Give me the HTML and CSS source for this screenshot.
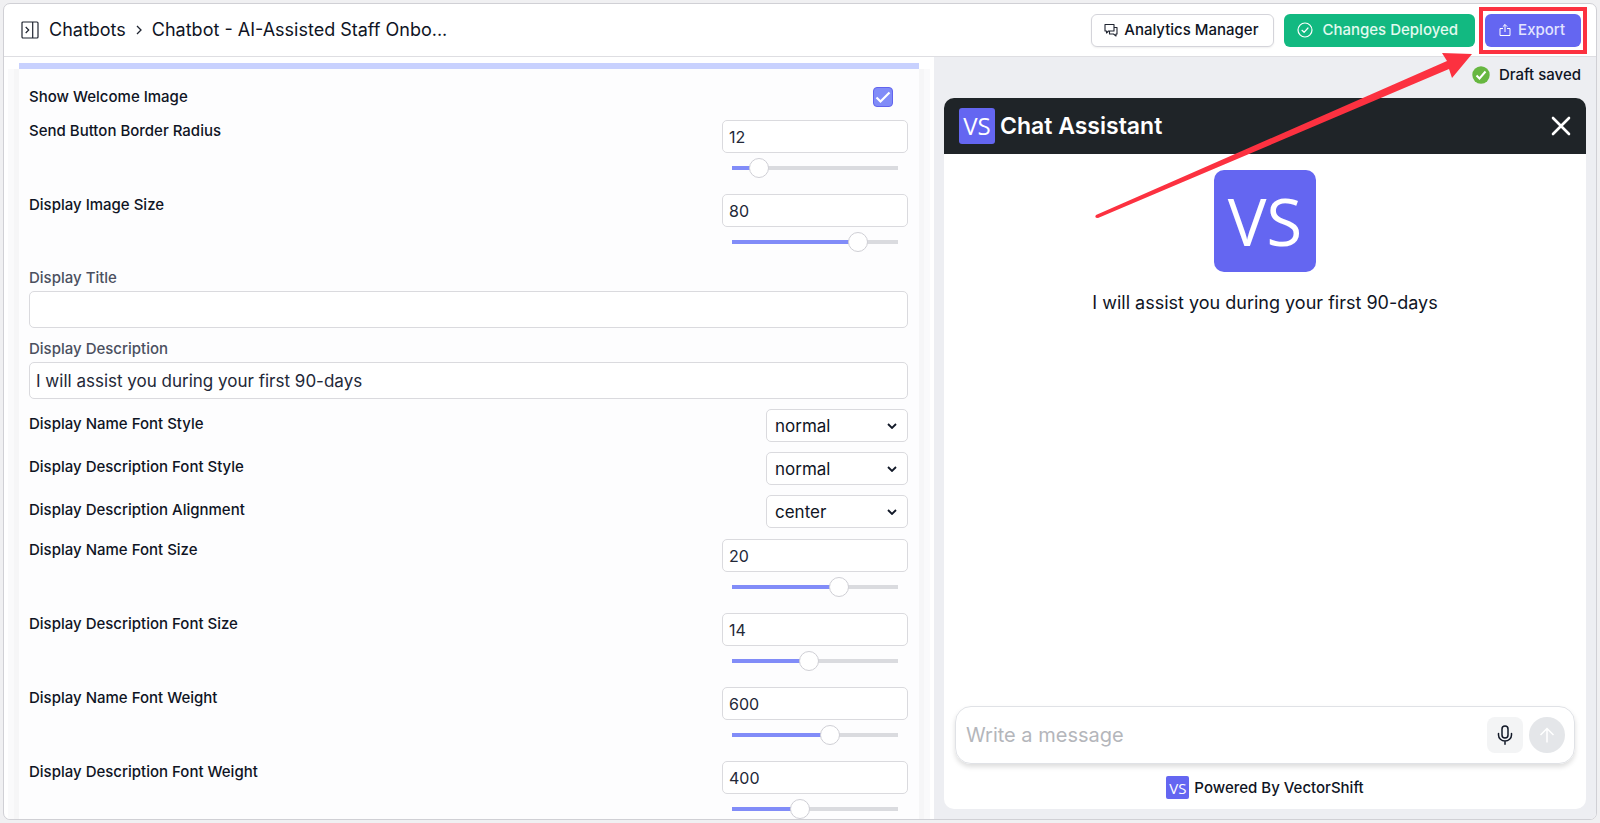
FILE: index.html
```html
<!DOCTYPE html>
<html lang="en">
<head>
<meta charset="utf-8">
<title>Chatbot - AI-Assisted Staff Onboarding</title>
<link rel="stylesheet" href="styles.css">
</head>
<body>
<div class="shell">
  <header class="topbar">
    <nav class="crumbs" aria-label="Breadcrumb">
      <button class="icon-button" type="button" aria-label="Expand sidebar">
        <svg width="18" height="18" viewBox="0 0 18 18" fill="none" stroke="#1f2430" stroke-width="1.2"><rect x="1" y="1" width="16" height="16" rx="1"/><path d="M11.7 1v16M4.7 6l3 3-3 3"/></svg>
      </button>
      <a class="crumb" href="#">Chatbots</a>
      <svg class="crumb-sep" width="6" height="10" viewBox="0 0 6 10" fill="none" stroke="#1f2430" stroke-width="1.3"><path d="M1 1l4 4-4 4"/></svg>
      <a class="crumb" href="#" aria-current="page">Chatbot - AI-Assisted Staff Onbo...</a>
    </nav>
    <div class="actions">
      <button class="btn btn-plain" type="button">
        <svg width="14" height="14" viewBox="0 0 14 14" fill="none" stroke="#1f2430" stroke-width="1.1" stroke-linejoin="round"><path d="M1 1.500h9v6.500H4.500L2.500 10V8H1z"/><path d="M10 4.500h3V11h-1v2l-2.500-2H5.500V8"/></svg>
        Analytics Manager
      </button>
      <button class="btn btn-green" type="button">
        <svg width="16" height="16" viewBox="0 0 16 16" fill="none" stroke="#fff" stroke-width="1.200" stroke-linecap="round" stroke-linejoin="round"><circle cx="8" cy="8" r="7"/><path d="M5 8.300l2.100 2 3.900-4.300"/></svg>
        Changes Deployed
      </button>
      <div class="highlight">
        <button class="btn btn-indigo" type="button">
          <svg width="12" height="14" viewBox="0 0 12 14" fill="none" stroke="#fff" stroke-width="1"><path d="M4 5.500H1v7h10v-7H8M6 9V1.500M3.800 3.700L6 1.500l2.200 2.200"/></svg>
          Export
        </button>
        <svg class="arrow" width="384" height="176" viewBox="0 0 384 176"><path d="M4 168L355 14l-5-8 30 1-20 24-3-9L6 171q-4 0-2-3z" fill="#fc3140"/></svg>
      </div>
    </div>
  </header>

  <main class="content">
    <section class="settings">
      <form class="card">
        <div class="row row-check">
          <label for="welcome">Show Welcome Image</label>
          <input class="check" id="welcome" type="checkbox" checked>
        </div>
        <div class="group">
          <div class="row">
            <label for="radius">Send Button Border Radius</label>
            <div class="field"><input class="box" id="radius" type="text" value="12"><input class="slider" type="range" aria-label="Send Button Border Radius" min="0" max="73" value="12" style="--fill:16%"></div>
          </div>
          <div class="row">
            <label for="imgsize">Display Image Size</label>
            <div class="field"><input class="box" id="imgsize" type="text" value="80"><input class="slider" type="range" aria-label="Display Image Size" min="0" max="105" value="80" style="--fill:76%"></div>
          </div>
        </div>
        <div class="stacks">
          <div class="stack">
            <label for="title">Display Title</label>
            <input class="box box-wide" id="title" type="text">
          </div>
          <div class="stack">
            <label for="desc">Display Description</label>
            <input class="box box-wide" id="desc" type="text" value="I will assist you during your first 90-days">
          </div>
        </div>
        <div class="selects">
          <div class="row row-select">
            <label for="namestyle">Display Name Font Style</label>
            <div class="select"><select id="namestyle"><option>normal</option><option>italic</option></select><svg width="10" height="6" viewBox="0 0 10 6"><path d="M1 1l4 4 4-4"/></svg></div>
          </div>
          <div class="row row-select">
            <label for="descstyle">Display Description Font Style</label>
            <div class="select"><select id="descstyle"><option>normal</option><option>italic</option></select><svg width="10" height="6" viewBox="0 0 10 6"><path d="M1 1l4 4 4-4"/></svg></div>
          </div>
          <div class="row row-select">
            <label for="align">Display Description Alignment</label>
            <div class="select"><select id="align"><option>center</option><option>left</option></select><svg width="10" height="6" viewBox="0 0 10 6"><path d="M1 1l4 4 4-4"/></svg></div>
          </div>
        </div>
        <div class="group">
          <div class="row">
            <label for="namesize">Display Name Font Size</label>
            <div class="field"><input class="box" id="namesize" type="text" value="20"><input class="slider" type="range" aria-label="Display Name Font Size" min="0" max="31" value="20" style="--fill:65%"></div>
          </div>
          <div class="row">
            <label for="descsize">Display Description Font Size</label>
            <div class="field"><input class="box" id="descsize" type="text" value="14"><input class="slider" type="range" aria-label="Display Description Font Size" min="0" max="30" value="14" style="--fill:47%"></div>
          </div>
          <div class="row">
            <label for="nameweight">Display Name Font Weight</label>
            <div class="field"><input class="box" id="nameweight" type="text" value="600"><input class="slider" type="range" aria-label="Display Name Font Weight" min="0" max="1020" value="600" style="--fill:59%"></div>
          </div>
          <div class="row">
            <label for="descweight">Display Description Font Weight</label>
            <div class="field"><input class="box" id="descweight" type="text" value="400"><input class="slider" type="range" aria-label="Display Description Font Weight" min="0" max="975" value="400" style="--fill:41%"></div>
          </div>
        </div>
      </form>
    </section>

    <section class="preview">
      <div class="saved">
        <svg width="18" height="18" viewBox="0 0 18 18"><circle cx="9" cy="9" r="8.700" fill="#67b741"/><path d="M4.500 9.500l3 3 6-7" fill="none" stroke="#fff" stroke-width="2"/></svg>
        <span>Draft saved</span>
      </div>
      <div class="chat">
        <div class="chat-head">
          <span class="logo logo-mid">VS</span>
          <h1>Chat Assistant</h1>
          <button class="icon-button" type="button" aria-label="Close">
            <svg width="20" height="20" viewBox="0 0 20 20" stroke="#fff" stroke-width="2.600" stroke-linecap="round"><path d="M2 2l16 16M18 2L2 18"/></svg>
          </button>
        </div>
        <div class="chat-body">
          <span class="logo logo-big">VS</span>
          <p>I will assist you during your first 90-days</p>
        </div>
        <div class="composer">
          <input type="text" placeholder="Write a message" aria-label="Write a message">
          <button class="mic" type="button" aria-label="Record">
            <svg width="16" height="20" viewBox="0 0 16 20" fill="none" stroke="#111827" stroke-width="1.500" stroke-linecap="round"><rect x="5" y="1" width="6" height="12" rx="3"/><path d="M1.500 8.500v1.500a6.500 6 0 0 0 13 0V8.500M8 16v3.200"/></svg>
          </button>
          <button class="send" type="button" aria-label="Send">
            <svg width="16" height="16" viewBox="0 0 16 16" fill="none" stroke="#fff" stroke-width="1.500"><path d="M8 15.500V1.500M1.500 8L8 1.500 14.500 8"/></svg>
          </button>
        </div>
        <footer class="powered"><span class="logo logo-small">VS</span><span>Powered By VectorShift</span></footer>
      </div>
    </section>
  </main>
</div>
</body>
</html>
```
FILE: styles.css
```css
* { box-sizing: border-box; }
body {
  margin: 0;
  background: #f0f0f2;
  color: #0f1424;
  font: 500 15px/20px Inter, sans-serif;
}
button, input, select { font: inherit; color: inherit; margin: 0; }
.shell {
  display: flex;
  flex-direction: column;
  height: calc(100vh - 6px);
  margin: 3px;
  border: 1px solid #d0d0d5;
  border-radius: 7px;
  background: #fff;
  overflow: hidden;
}
.topbar {
  display: flex;
  flex: none;
  align-items: center;
  justify-content: space-between;
  height: 53px;
  padding: 0 15px 0 17px;
  border-bottom: 1px solid #dedee2;
}
.crumbs { display: flex; align-items: center; gap: 10px; font-size: 18px; font-weight: 400; }
.crumb { color: inherit; text-decoration: none; }
.icon-button { display: flex; padding: 0; border: 0; background: none; }
.actions { display: flex; align-items: center; gap: 10px; }
.btn {
  display: flex;
  align-items: center;
  gap: 6px;
  height: 33px;
  padding: 0 15px 0 12px;
  border: 1px solid transparent;
  border-radius: 6px;
  font-size: 15px;
  white-space: nowrap;
}
.btn-plain { border-color: #d4d4da; background: #fff; box-shadow: 0 1px 2px #0001; }
.btn-green { gap: 9px; padding-right: 16px; background: #12b981; color: #e2faf0; }
.btn-indigo { gap: 7px; padding-left: 13px; background: #6466f1; color: #e2e4ff; }
.highlight { position: relative; }
.highlight::after {
  content: "";
  position: absolute;
  inset: -7px -6px;
  border: 4px solid #fc3140;
  pointer-events: none;
}
.arrow { position: absolute; right: 105px; top: 33px; z-index: 2; pointer-events: none; }

.content { display: grid; grid-template-columns: 930fr 662fr; flex: 1; min-height: 0; }
.settings { min-height: 0; padding: 6px 15px 0 4px; overflow: hidden; }
.card {
  margin-left: 11px;
  padding: 14px 11px 20px 10px;
  border-top: 6px solid #c8d1fe;
  background: #fdfdfe;
  box-shadow: -5px 6px 0 #f6f6f7, 5px 6px 0 #f6f6f7, -11px 6px 0 #fafafb, 11px 6px 0 #fafafb;
}
.row { display: flex; justify-content: space-between; align-items: flex-start; }
.row-check { align-items: center; height: 27px; padding-right: 15px; margin-bottom: 10px; }
.check {
  appearance: none;
  width: 20px;
  height: 20px;
  border: 1px solid #6264ee;
  border-radius: 4px;
  background: #818cf8 url("data:image/svg+xml,%3Csvg xmlns='http://www.w3.org/2000/svg' viewBox='0 0 18 18'%3E%3Cpath d='M2.500 9.500l4 4 9-9' fill='none' stroke='white' stroke-width='2.200'/%3E%3C/svg%3E") center / 18px no-repeat;
}
.group { display: grid; gap: 16px; }
.group label { line-height: 22px; }
.field { display: grid; gap: 5px; width: 186px; }
.box {
  width: 100%;
  height: 33px;
  padding: 0 6px;
  border: 1px solid #dadade;
  border-radius: 5px;
  background: #fff;
  color: #232838;
  font-size: 16px;
  font-weight: 400;
}
.box-wide { height: 37px; font-size: 17px; }
.slider {
  appearance: none;
  width: 100%;
  height: 20px;
  background: none;
}
.slider::-webkit-slider-runnable-track {
  height: 4px;
  background: linear-gradient(to right, #818cf8 var(--fill), #dadbdf var(--fill)) center / calc(100% - 20px) 4px no-repeat;
}
.slider::-webkit-slider-thumb {
  appearance: none;
  width: 20px;
  height: 20px;
  margin-top: -8px;
  border: 1px solid #cfcfd5;
  border-radius: 50%;
  background: #fff;
}
.stacks { display: grid; gap: 11px; margin: 16px 0 10px; }
.stack { display: grid; gap: 3px; }
.stack label { color: #4b5060; }
.selects { display: grid; gap: 10px; margin-bottom: 11px; }
.row-select label { line-height: 30px; }
.select { position: relative; width: 142px; }
.select select {
  appearance: none;
  width: 100%;
  height: 33px;
  padding: 0 28px 0 8px;
  border: 1px solid #dadade;
  border-radius: 5px;
  background: #fff;
  font-size: 17px;
  font-weight: 400;
}
.select svg {
  position: absolute;
  right: 11px;
  top: 14px;
  fill: none;
  stroke: #111827;
  stroke-width: 1.8;
  pointer-events: none;
}

.preview { display: flex; flex-direction: column; min-height: 0; padding: 8px 10px 10px; background: #edeef2; }
.saved { display: flex; align-items: center; justify-content: flex-end; gap: 9px; padding-right: 5px; margin-bottom: 13px; font-size: 15px; }
.chat { display: flex; flex: 1; flex-direction: column; border-radius: 10px; background: #fff; overflow: hidden; }
.chat-head { display: flex; align-items: center; gap: 5px; height: 56px; padding: 0 15px; background: #1f2428; color: #fff; }
.chat-head h1 { flex: 1; margin: 0; font-size: 23px; font-weight: 600; line-height: 28px; }
.logo { display: flex; flex: none; align-items: center; justify-content: center; background: #6466f1; color: #fff; font-family: "Open Sans", "Noto Sans", sans-serif; font-weight: 400; }
.logo-mid { width: 36px; height: 36px; border-radius: 3px; font-size: 24px; }
.logo-big { width: 102px; height: 102px; border-radius: 10px; font-size: 65px; }
.logo-small { width: 23px; height: 23px; border-radius: 2px; font-size: 15px; }
.chat-body { display: flex; flex: 1; flex-direction: column; align-items: center; gap: 20px; padding-top: 16px; }
.chat-body p { margin: 0; font-size: 18px; font-weight: 400; line-height: 22px; }
.composer {
  display: flex;
  align-items: center;
  gap: 6px;
  height: 58px;
  margin: 0 11px 12px;
  padding: 0 9px 0 10px;
  border: 1px solid #e0e2e6;
  border-radius: 16px;
  box-shadow: 0 3px 5px #0002;
}
.composer input { flex: 1; min-width: 0; padding: 0; border: 0; background: none; font-size: 20px; font-weight: 400; line-height: 28px; }
.composer input::placeholder { color: #b4b6bb; }
.mic, .send { display: flex; align-items: center; justify-content: center; width: 36px; height: 36px; padding: 0; border: 0; border-radius: 8px; background: #f3f4f5; }
.send { border-radius: 50%; background: #e4e6e9; }
.powered { display: flex; align-items: center; justify-content: center; gap: 5px; margin-bottom: 10px; font-size: 15px; }
```
